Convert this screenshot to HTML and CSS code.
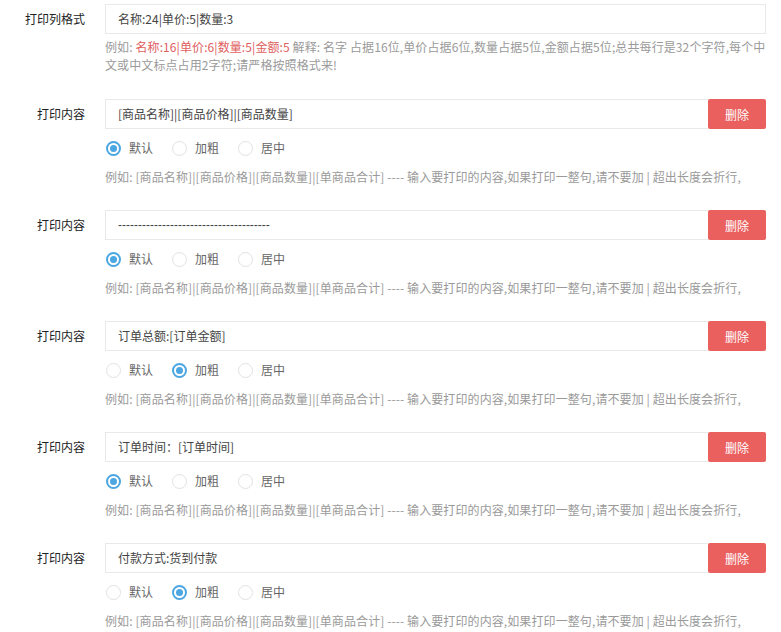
FILE: index.html
```html
<!DOCTYPE html>
<html lang="zh-CN">
<head>
<meta charset="utf-8">
<link rel="stylesheet" href="styles.css">
</head>
<body>
<div class="form">
  <div class="group first">
    <label class="label">打印列格式</label>
    <div class="field">
      <div class="input full">名称:24|单价:5|数量:3</div>
      <div class="help two">
        <span class="line">例如: <span class="red">名称:16|单价:6|数量:5|金额:5</span> 解释: 名字 占据16位,单价占据6位,数量占据5位,金额占据5位;总共每行是32个字符,每个中</span>
        <span class="line">文或中文标点占用2字符;请严格按照格式来!</span>
      </div>
    </div>
  </div>

  <div class="group">
    <label class="label">打印内容</label>
    <div class="field">
      <div class="input-row"><div class="input">[商品名称]|[商品价格]|[商品数量]</div><button class="btn">删除</button></div>
      <div class="radios">
        <span class="radio on"><i></i>默认</span><span class="radio"><i></i>加粗</span><span class="radio"><i></i>居中</span>
      </div>
      <div class="help">例如: [商品名称]|[商品价格]|[商品数量]|[单商品合计] ---- 输入要打印的内容,如果打印一整句,请不要加 | 超出长度会折行,</div>
    </div>
  </div>

  <div class="group">
    <label class="label">打印内容</label>
    <div class="field">
      <div class="input-row"><div class="input dash">--------------------------------------</div><button class="btn">删除</button></div>
      <div class="radios">
        <span class="radio on"><i></i>默认</span><span class="radio"><i></i>加粗</span><span class="radio"><i></i>居中</span>
      </div>
      <div class="help">例如: [商品名称]|[商品价格]|[商品数量]|[单商品合计] ---- 输入要打印的内容,如果打印一整句,请不要加 | 超出长度会折行,</div>
    </div>
  </div>

  <div class="group">
    <label class="label">打印内容</label>
    <div class="field">
      <div class="input-row"><div class="input">订单总额:[订单金额]</div><button class="btn">删除</button></div>
      <div class="radios">
        <span class="radio"><i></i>默认</span><span class="radio on"><i></i>加粗</span><span class="radio"><i></i>居中</span>
      </div>
      <div class="help">例如: [商品名称]|[商品价格]|[商品数量]|[单商品合计] ---- 输入要打印的内容,如果打印一整句,请不要加 | 超出长度会折行,</div>
    </div>
  </div>

  <div class="group">
    <label class="label">打印内容</label>
    <div class="field">
      <div class="input-row"><div class="input">订单时间：[订单时间]</div><button class="btn">删除</button></div>
      <div class="radios">
        <span class="radio on"><i></i>默认</span><span class="radio"><i></i>加粗</span><span class="radio"><i></i>居中</span>
      </div>
      <div class="help">例如: [商品名称]|[商品价格]|[商品数量]|[单商品合计] ---- 输入要打印的内容,如果打印一整句,请不要加 | 超出长度会折行,</div>
    </div>
  </div>

  <div class="group">
    <label class="label">打印内容</label>
    <div class="field">
      <div class="input-row"><div class="input">付款方式:货到付款</div><button class="btn">删除</button></div>
      <div class="radios">
        <span class="radio"><i></i>默认</span><span class="radio on"><i></i>加粗</span><span class="radio"><i></i>居中</span>
      </div>
      <div class="help">例如: [商品名称]|[商品价格]|[商品数量]|[单商品合计] ---- 输入要打印的内容,如果打印一整句,请不要加 | 超出长度会折行,</div>
    </div>
  </div>
</div>
</body>
</html>
```

FILE: styles.css
```css
html, body {
  margin: 0;
  padding: 0;
  background: #fff;
}
body {
  font-family: "Noto Sans CJK SC", "Noto Sans", sans-serif;
  font-size: 12px;
  color: #333;
}
.form {
  padding-top: 4px;
}
.group {
  display: flex;
  align-items: flex-start;
  margin-bottom: 24px;
}
.group.first {
  margin-bottom: 25px;
}
.label {
  width: 85px;
  flex: none;
  text-align: right;
  line-height: 30px;
  height: 30px;
  color: #222;
}
.field {
  margin-left: 20px;
  width: 661px;
}
.input {
  box-sizing: border-box;
  height: 30px;
  line-height: 28px;
  border: 1px solid #e9e9e9;
  padding: 0 12px;
  color: #444;
  background: #fff;
  white-space: nowrap;
  overflow: hidden;
}
.input-row {
  display: flex;
}
.input-row .input {
  flex: 1;
  border-right: none;
}
.input.dash {
  font-family: "Liberation Sans", sans-serif;
}
.btn {
  flex: none;
  width: 58px;
  height: 30px;
  border: none;
  border-radius: 2px;
  background: #e9605f;
  color: #fff;
  font-family: "Noto Sans CJK SC", sans-serif;
  font-size: 12px;
  padding: 0;
  cursor: pointer;
}
.help {
  margin-top: 10px;
  line-height: 18px;
  color: #9a9a9a;
  white-space: nowrap;
  letter-spacing: 0.1px;
}
.help.two {
  margin-top: 4px;
}
.help .line {
  display: block;
}
.red {
  color: #e0605e;
}
.radios {
  margin-top: 9px;
  height: 20px;
  display: flex;
  align-items: center;
  padding-left: 1px;
  color: #666;
}
.radio {
  display: inline-flex;
  align-items: center;
  margin-right: 19px;
  line-height: 20px;
}
.radio i {
  box-sizing: border-box;
  width: 15px;
  height: 15px;
  border-radius: 50%;
  border: 1px solid #e2e2e2;
  margin-right: 8px;
  position: relative;
  background: #fff;
}
.radio.on i {
  border: 2px solid #4ba6e2;
}
.radio.on i::after {
  content: "";
  position: absolute;
  left: 2px;
  top: 2px;
  width: 7px;
  height: 7px;
  border-radius: 50%;
  background: #4ba6e2;
}
```
